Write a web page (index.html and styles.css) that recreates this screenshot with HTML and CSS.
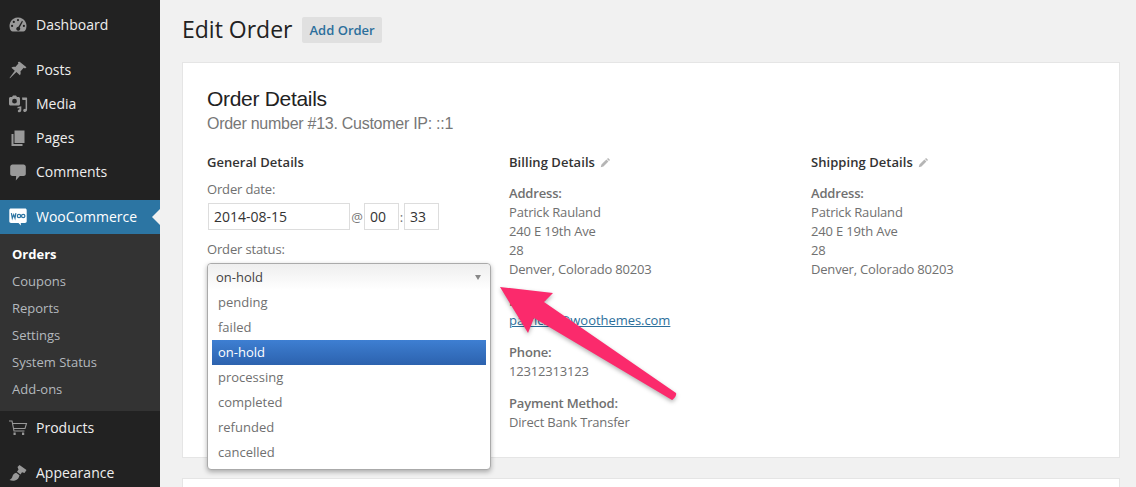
FILE: index.html
```html
<!DOCTYPE html>
<html lang="en">
<head>
    <meta charset="UTF-8">
    <title>Edit Order</title>
    <link rel="stylesheet" href="styles.css">
</head>
<body>
    <div class="layout">
        <nav class="sidebar">
            <ul class="menu">
                <li class="menu-item">
                    <svg class="menu-icon" viewBox="0 0 20 20"><path fill-rule="evenodd" d="M10 2.5a8.5 8.5 0 0 0-7 13.3c.4.6 1 .7 1.6.7h10.800c.6 0 1.200-.1 1.600-.7A8.500 8.500 0 0 0 10 2.500zM10 4a1.100 1.100 0 1 1 0 2.200A1.100 1.100 0 0 1 10 4zM5.800 5.800a1.100 1.100 0 1 1 0 2.200 1.100 1.100 0 0 1 0-2.200zM4.100 9.800a1.100 1.100 0 1 1 0 2.200 1.100 1.100 0 0 1 0-2.200zM15.900 9.800a1.100 1.100 0 1 1 0 2.200 1.100 1.100 0 0 1 0-2.200zM14 5.800l.9.600-3.200 6a2 2 0 1 1-1.300-.6z"/></svg>
                    <span>Dashboard</span>
                </li>
                <li class="menu-sep"></li>
                <li class="menu-item">
                    <svg class="menu-icon" viewBox="0 0 20 20"><path d="M11.600 1.800l6.900 5.500-1.500 1.100-1.300-.6-3.300 3.600c.5 1.500.3 2.800-.5 3.900L8.400 12 2 18.300 1.500 18l5.300-7.200-3.400-3c1-.9 2.300-1.200 3.900-.8l3.100-3.600-.5-1.300z"/></svg>
                    <span>Posts</span>
                </li>
                <li class="menu-item">
                    <svg class="menu-icon" viewBox="0 0 20 20"><path fill-rule="evenodd" d="M5 1.500h3l1 1.500h1.500c.8 0 1.500.7 1.500 1.500V10c0 .8-.7 1.500-1.500 1.500h-8C1.700 11.500 1 10.800 1 10V4.500C1 3.700 1.700 3 2.500 3H4zM6.500 4.800a2.400 2.400 0 1 0 0 4.800 2.400 2.400 0 0 0 0-4.800z"/><path d="M14 3.500h4.500a.6.6 0 0 1 .6.600v11.400c0 1.500-1 2.500-2.200 2.500-1 0-1.700-.6-1.700-1.500s.8-1.700 1.800-1.700l.6.100V6h-3.200zM9.500 13l3.800-.8v4c0 1.200-.9 2-2 2-.9 0-1.500-.6-1.500-1.300 0-.9.800-1.500 1.600-1.500V14l-1.900.4z"/></svg>
                    <span>Media</span>
                </li>
                <li class="menu-item">
                    <svg class="menu-icon" viewBox="0 0 20 20"><path d="M6.500 2.500H16.500v12.500H6.500z"/><path d="M3.500 6h2v10h9v2h-11z"/></svg>
                    <span>Pages</span>
                </li>
                <li class="menu-item">
                    <svg class="menu-icon" viewBox="0 0 20 20"><path d="M4.500 2.500h11c1.300 0 2.300 1 2.300 2.300v7c0 1.300-1 2.300-2.300 2.300h-3.700L7.800 18.500l.4-4.400H4.500c-1.300 0-2.300-1-2.300-2.300v-7c0-1.300 1-2.300 2.300-2.300z"/></svg>
                    <span>Comments</span>
                </li>
                <li class="menu-sep"></li>
                <li class="menu-item current">
                    <svg class="menu-icon woo-icon" viewBox="0 0 20 20"><path fill="#fff" d="M3 1.500h14c1 0 1.700.7 1.700 1.700v11.100c0 1-.7 1.700-1.700 1.700h-4.200l.1 2.500L10.500 16H3c-1 0-1.700-.7-1.700-1.700V3.200c0-1 .7-1.700 1.700-1.700z"/><path fill="none" stroke="#2c75a3" stroke-width="1.200" d="M3.400 6.200l.9 5 1.400-3.600 1.300 3.600.9-5"/><circle cx="11" cy="9" r="1.700" fill="none" stroke="#2c75a3" stroke-width="1.200"/><circle cx="15.200" cy="9" r="1.700" fill="none" stroke="#2c75a3" stroke-width="1.200"/></svg>
                    <span>WooCommerce</span>
                </li>
                <li class="submenu">
                    <ul>
                        <li class="active">Orders</li>
                        <li>Coupons</li>
                        <li>Reports</li>
                        <li>Settings</li>
                        <li>System Status</li>
                        <li>Add-ons</li>
                    </ul>
                </li>
                <li class="menu-item">
                    <svg class="menu-icon" viewBox="0 0 20 20"><path fill="none" stroke="#999" stroke-width="1.100" d="M1 3h3l2 10h10.500M4.500 5.500h14l-1.500 5H5.500"/><path d="M5.500 14.500h2.200v2.500H5.500zM14 14.500h2.200v2.500H14z"/></svg>
                    <span>Products</span>
                </li>
                <li class="menu-sep"></li>
                <li class="menu-item">
                    <svg class="menu-icon" viewBox="0 0 20 20"><path d="M11.500 2l7 5-2 3-2.500-.8-1.500 2.300L9 8.700l1.500-2.200L9.500 4zM8.200 9.700l3.300 2.500c-.4 2.500-2 4.800-4.500 5.300-1.800.4-3.800.2-5.500-.5 1.500-.8 2.600-2.200 3-3.800.4-1.700 2-3 3.700-3.500z"/></svg>
                    <span>Appearance</span>
                </li>
            </ul>
        </nav>

        <main class="content">
            <div class="page-head">
                <h1>Edit Order</h1>
                <a class="add-btn">Add Order</a>
            </div>

            <section class="card">
                <h2>Order Details</h2>
                <p class="order-number">Order number #13. Customer IP: ::1</p>

                <div class="columns">
                    <div class="col">
                        <h4>General Details</h4>
                        <label class="field-label">Order date:</label>
                        <div class="date-row">
                            <div class="input date-input">2014-08-15</div>
                            <span class="at">@</span>
                            <div class="input time-input">00</div>
                            <span class="colon">:</span>
                            <div class="input time-input">33</div>
                        </div>
                        <label class="field-label status-label">Order status:</label>
                        <div class="select-wrap">
                            <div class="dropdown">
                                <div class="dropdown-head">on-hold<span class="caret"></span></div>
                                <ul class="options">
                                    <li>pending</li>
                                    <li>failed</li>
                                    <li class="selected">on-hold</li>
                                    <li>processing</li>
                                    <li>completed</li>
                                    <li>refunded</li>
                                    <li>cancelled</li>
                                </ul>
                            </div>
                        </div>
                    </div>

                    <div class="col">
                        <h4>Billing Details
                            <svg class="pencil" viewBox="0 0 12 12"><path d="M8.800 1l2.200 2.200-1.200 1.200-2.200-2.200zM7 2.800L9.200 5l-5.400 5.400-3 .8.800-3z"/></svg>
                        </h4>
                        <div class="info">
                            <p><strong>Address:</strong><br>Patrick Rauland<br>240 E 19th Ave<br>28<br>Denver, Colorado 80203</p>
                            <p><strong>Email:</strong><br><a class="mail">patrick.r@woothemes.com</a></p>
                            <p><strong>Phone:</strong><br>12312313123</p>
                            <p><strong>Payment Method:</strong><br>Direct Bank Transfer</p>
                        </div>
                    </div>

                    <div class="col">
                        <h4>Shipping Details
                            <svg class="pencil" viewBox="0 0 12 12"><path d="M8.800 1l2.200 2.200-1.200 1.200-2.200-2.200zM7 2.800L9.200 5l-5.400 5.400-3 .8.800-3z"/></svg>
                        </h4>
                        <div class="info">
                            <p><strong>Address:</strong><br>Patrick Rauland<br>240 E 19th Ave<br>28<br>Denver, Colorado 80203</p>
                        </div>
                    </div>
                </div>
            </section>

            <section class="card next-card"></section>
        </main>
    </div>

    <!-- annotation arrow drawn on top of the screenshot -->
    <svg class="arrow" viewBox="0 0 200 130" width="200" height="130">
        <path d="M10 7L63 13 54 22 186 113C187 115 184 119 182 120L44 38 38 53z" fill="#fb2a6c"/>
    </svg>
</body>
</html>
```

FILE: styles.css
```css
* {
    margin: 0;
    padding: 0;
    box-sizing: border-box;
}

html, body {
    height: 487px;
    overflow: hidden;
}

body {
    background-color: #f1f1f1;
    font-family: "Open Sans", sans-serif;
    font-size: 13px;
    color: #707070;
}

ul {
    list-style: none;
}

.layout {
    display: flex;
    height: 487px;
}

/* sidebar */
.sidebar {
    width: 160px;
    height: 487px;
    overflow: hidden;
    flex-shrink: 0;
    background-color: #222;
    padding-top: 8px;
}

.menu-item {
    display: flex;
    align-items: center;
    height: 34px;
    padding-left: 8px;
    gap: 8px;
    color: #eee;
    font-size: 14px;
    position: relative;
}

.menu-item span {
    margin-bottom: 2px;
}

.menu-icon {
    width: 20px;
    height: 20px;
    fill: #999;
    flex-shrink: 0;
}

.menu-sep {
    height: 11px;
}

.menu-item.current {
    background-color: #2c75a3;
    color: #fff;
}

.menu-item.current::after {
    content: "";
    position: absolute;
    right: 0;
    top: 9px;
    border: 8px solid transparent;
    border-right-color: #f1f1f1;
    border-left-width: 0;
}

.submenu {
    background-color: #333;
    padding: 7px 0 8px 12px;
    color: #b4b9be;
}

.submenu li {
    height: 27px;
    line-height: 27px;
}

.submenu .active {
    color: #fff;
    font-weight: 700;
}

/* main */
.content {
    flex: 1;
    padding: 0 16px 0 22px;
    min-width: 0;
}

.page-head {
    display: flex;
    align-items: flex-start;
    gap: 9px;
    padding-top: 17px;
    height: 62px;
}

h1 {
    font-size: 23px;
    font-weight: 400;
    color: #222;
    line-height: 25px;
}

.add-btn {
    display: block;
    height: 26px;
    line-height: 26px;
    padding: 0 7px 0 8px;
    background-color: #e0e0e0;
    border-radius: 2px;
    color: #2c6f9c;
    font-weight: 600;
}

.card {
    position: relative;
    height: 396px;
    background-color: #fff;
    border: 1px solid #e5e5e5;
    padding: 23px 24px;
}

.next-card {
    height: 9px;
    margin-top: 20px;
    padding: 0;
    border-bottom: 0;
}

h2 {
    font-family: "Liberation Sans", sans-serif;
    font-size: 21px;
    font-weight: 400;
    letter-spacing: -0.3px;
    line-height: 26px;
    color: #222;
}

.order-number {
    font-family: "Liberation Sans", sans-serif;
    font-size: 16px;
    letter-spacing: -0.27px;
    line-height: 22px;
    margin-top: 1px;
    color: #777;
}

.columns {
    display: grid;
    grid-template-columns: repeat(3, 302px);
    margin-top: 18px;
}

h4 {
    display: flex;
    align-items: center;
    gap: 5px;
    font-size: 13px;
    font-weight: 600;
    letter-spacing: 0.05px;
    line-height: 18px;
    color: #333;
}

.pencil {
    width: 11px;
    height: 11px;
    fill: #b5b5b5;
}

.field-label {
    display: block;
    margin-top: 9px;
    letter-spacing: -0.15px;
    line-height: 18px;
}

.status-label {
    margin-top: 10px;
}

.date-row {
    display: flex;
    align-items: center;
    margin: 5px 0 0 1px;
}

.input {
    height: 27px;
    line-height: 25px;
    border: 1px solid #ddd;
    padding-left: 5px;
    color: #333;
    font-size: 14px;
}

.date-input {
    width: 142px;
}

.time-input {
    width: 35px;
}

.at {
    width: 14px;
    text-align: center;
    color: #777;
}

.colon {
    width: 5px;
    text-align: center;
}

.select-wrap {
    position: relative;
    margin-top: 5px;
    height: 26px;
}

.dropdown {
    position: absolute;
    left: 0;
    top: 0;
    width: 284px;
    height: 207px;
    background-color: #fff;
    border: 1px solid #aaa;
    border-radius: 4px;
    box-shadow: 0 2px 5px rgba(0, 0, 0, 0.3);
    z-index: 2;
}

.dropdown-head {
    position: relative;
    height: 26px;
    line-height: 26px;
    padding-left: 8px;
    color: #444;
    background: linear-gradient(#eee, #fff);
    border-radius: 4px 4px 0 0;
}

.caret {
    position: absolute;
    right: 9px;
    top: 11px;
    border: 3px solid transparent;
    border-top: 5px solid #888;
    border-bottom: 0;
}

.options li {
    height: 25px;
    line-height: 25px;
    margin: 0 4px;
    padding-left: 6px;
}

.options .selected {
    color: #fff;
    background: linear-gradient(#3e7fd2, #2c62ae);
}

.info {
    margin-top: 13px;
    letter-spacing: -0.18px;
    line-height: 19px;
}

.info p {
    margin-bottom: 13px;
}

.info strong {
    font-weight: 600;
}

.mail {
    color: #2c6f9c;
    letter-spacing: -0.05px;
    text-decoration: underline;
}

.arrow {
    position: absolute;
    left: 490px;
    top: 280px;
    z-index: 5;
    filter: drop-shadow(0 2px 2px rgba(0, 0, 0, 0.3));
}
```
